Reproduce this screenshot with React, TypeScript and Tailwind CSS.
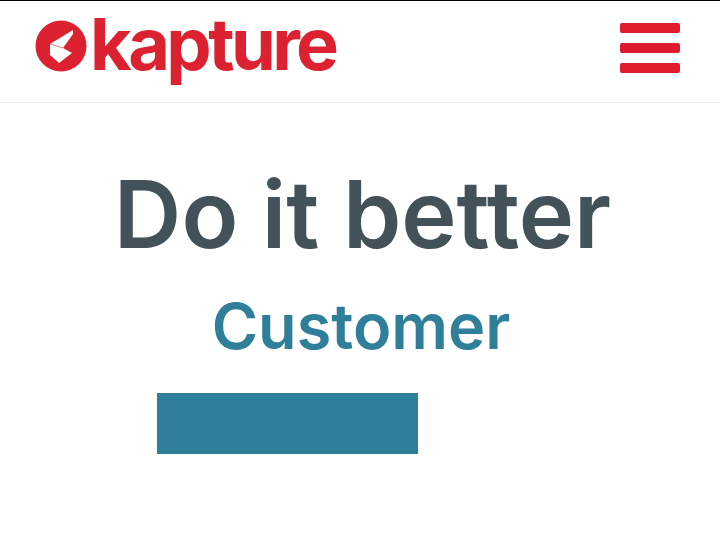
const LOGO_RED = "#dc2230";

function LogoMark() {
  return (
    <svg width="52" height="52" viewBox="0 0 52 52" className="shrink-0">
      <circle cx="26" cy="26" r="25.5" fill={LOGO_RED} />
      {/* folded box cut out of the circle */}
      <path d="M15 24 L38 10 L38 14 L28 28 L37 33 L24 43 L15 35 Z" fill="#fff" />
      <path d="M15 24 L28 28" stroke={LOGO_RED} strokeWidth="1" fill="none" opacity="0.6" />
    </svg>
  );
}

export default function App() {
  return (
    <div className="w-[720px] h-[540px] bg-white overflow-hidden border-t border-black font-['Inter',sans-serif]">
      <header className="h-[102px] border-b border-[#e8e8e8] flex items-start justify-between pl-[35px] pr-[40px]">
        <div className="flex items-start gap-[3px] pt-[19px]">
          <LogoMark />
          <span className="text-[#dc2230] text-[72px] leading-[72px] font-bold tracking-[-3.6px] -mt-[12px] pr-[6px]">
            kapture
          </span>
        </div>
        <div className="flex flex-col gap-[10px] pt-[22px]">
          <span className="block w-[60px] h-[10px] rounded-[2px] bg-[#e01b2b]" />
          <span className="block w-[60px] h-[10px] rounded-[2px] bg-[#e01b2b]" />
          <span className="block w-[60px] h-[10px] rounded-[2px] bg-[#e01b2b]" />
        </div>
      </header>
      <main className="flex flex-col">
        <h1 className="text-center text-[#435158] text-[93.5px] leading-[112px] font-semibold pt-[55px] pl-[5px]">
          Do it better
        </h1>
        <h2 className="text-center text-[#2f7f9b] text-[63px] leading-[72px] font-semibold mt-[20px] pl-[2px]">
          Customer
        </h2>
        <div className="w-[261px] h-[61px] bg-[#2f7f9b] ml-[157px] mt-[31px]" />
      </main>
    </div>
  );
}
